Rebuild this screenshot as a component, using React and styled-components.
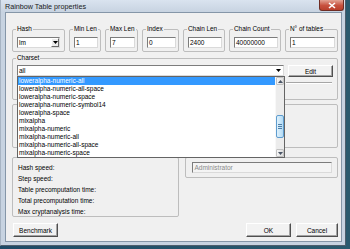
import React from 'react'
import styled, { createGlobalStyle } from 'styled-components'

const GlobalStyle = createGlobalStyle`
  html, body {
    margin: 0;
    padding: 0;
  }
  body {
    width: 350px;
    height: 249px;
    overflow: hidden;
    background: linear-gradient(90deg, #1e4a66, #2a5a6e);
    font-family: "Liberation Sans", Arial, sans-serif;
    color: #000;
  }
`

const Window = styled.div`
  box-sizing: border-box;
  width: 346px;
  height: 246px;
  display: flex;
  flex-direction: column;
  padding: 0 3px 3px 4px;
  background: #c7d3e1;
  border-left: 1px solid #a7b4c3;
  border-right: 1px solid #4d5e6d;
  border-bottom: 1px solid #4d5e6d;
`

const TitleBar = styled.div`
  height: 12px;
  display: flex;
  align-items: flex-start;
  margin: 0 -3px 0 -4px;
  padding-left: 4px;
  background: linear-gradient(#d9e3ef, #c7d3e1);
`

const Title = styled.div`
  font-size: 7.2px;
  line-height: 12px;
  padding-top: 1px;
  color: #1a1a1a;
`

const Close = styled.div`
  box-sizing: border-box;
  margin-left: auto;
  margin-right: 1px;
  width: 25px;
  height: 11px;
  display: flex;
  align-items: center;
  justify-content: center;
  background: linear-gradient(#e3a393, #c7513e 55%, #b9402c);
  border: 1px solid #6f2d24;
  border-top: none;
  border-radius: 0 0 3px 3px;
`

const Client = styled.div`
  flex: 1;
  display: flex;
  flex-direction: column;
  padding: 12px 3px 3px 6px;
  background: #f0f0f0;
  border: 1px solid #8596a8;
`

const Row = styled.div`
  display: flex;
  gap: ${p => p.$gap || 4}px;
  align-items: flex-start;
  margin-top: ${p => p.$top || 0}px;
`

const Group = styled.fieldset`
  box-sizing: border-box;
  margin: 0;
  min-width: 0;
  width: ${p => (p.$w ? p.$w + 'px' : 'auto')};
  height: ${p => (p.$h ? p.$h + 'px' : 'auto')};
  padding: ${p => p.$pad || '4px 2px 3px 4px'};
  border: 1px solid #bdbdbd;
  border-radius: 2px;
`

const Caption = styled.legend`
  padding: 0 1px;
  margin-left: -1px;
  font-size: 6.4px;
  line-height: 8px;
  white-space: nowrap;
`

const Field = styled.div`
  box-sizing: border-box;
  height: 11px;
  padding: 0 1px;
  font-size: 6.5px;
  line-height: 9px;
  background: ${p => (p.$disabled ? '#f4f4f4' : '#fff')};
  color: ${p => (p.$disabled ? '#8a8a8a' : '#000')};
  border: 1px solid;
  border-color: #7c7c7c #dadada #dadada #7c7c7c;
`

const Combo = styled.div`
  position: relative;
  box-sizing: border-box;
  flex: 1;
  height: 11px;
  display: flex;
  align-items: center;
  padding-left: 1px;
  font-size: 6.5px;
  background: #fff;
  border: 1px solid;
  border-color: #7c7c7c #dadada #dadada #7c7c7c;
`

const ComboText = styled.span`
  flex: 1;
`

const DropButton = styled.div`
  box-sizing: border-box;
  width: 8px;
  height: 9px;
  display: flex;
  align-items: center;
  justify-content: center;
  background: #ececec;
  border: 1px solid;
  border-color: #fff #6a6a6a #6a6a6a #fff;
`

const Arrow = ({ up, color = '#000' }) => (
  <svg width="5" height="3" viewBox="0 0 5 3">
    <path d={up ? 'M0 3 L2.5 0 L5 3 Z' : 'M0 0 L5 0 L2.5 3 Z'} fill={color} />
  </svg>
)

const ComboArrow = styled.div`
  display: flex;
  margin-right: 2px;
`

const Button = styled.button`
  box-sizing: border-box;
  width: ${p => p.$w}px;
  height: ${p => p.$h || 14}px;
  margin: 0;
  padding: 0;
  display: flex;
  align-items: center;
  justify-content: center;
  font-family: inherit;
  font-size: 6.5px;
  color: #000;
  background: #f2f2f2;
  border: 1px solid;
  border-color: #fff #4f4f4f #4f4f4f #fff;
  box-shadow: inset -1px -1px 0 #a3a3a3;
`

const Separator = styled.div`
  width: 46px;
  height: 0;
  margin: 5px 1px 0 auto;
  border-top: 1px solid #a6a6a6;
  border-bottom: 1px solid #fff;
`

const DropList = styled.div`
  position: absolute;
  top: 10px;
  left: -1px;
  z-index: 5;
  box-sizing: border-box;
  width: 268px;
  height: 82px;
  display: flex;
  background: #fff;
  border: 1px solid #646464;
`

const Items = styled.div`
  flex: 1;
`

const Item = styled.div`
  height: 8px;
  line-height: 8px;
  padding-left: 1px;
  font-size: 6.5px;
  white-space: nowrap;
  background: ${p => (p.$selected ? '#3399ff' : 'transparent')};
  color: ${p => (p.$selected ? '#fff' : '#000')};
`

const ScrollBar = styled.div`
  width: 8px;
  display: flex;
  flex-direction: column;
  background: #ececec;
  border-left: 1px solid #f8f8f8;
`

const ScrollButton = styled.div`
  box-sizing: border-box;
  height: 8px;
  display: flex;
  align-items: center;
  justify-content: center;
  background: linear-gradient(90deg, #f6f6f6, #dedede);
  border: 1px solid #c2c2c2;
  border-radius: 1px;
`

const Track = styled.div`
  flex: 1;
`

const Thumb = styled.div`
  box-sizing: border-box;
  height: 23px;
  margin-top: 30px;
  display: flex;
  flex-direction: column;
  align-items: center;
  justify-content: center;
  gap: 1px;
  background: linear-gradient(90deg, #dff1fc, #b3dbf5);
  border: 1px solid #5f9dcf;
  border-radius: 2px;
`

const Grip = styled.div`
  width: 4px;
  height: 1px;
  background: #4f7fa8;
`

const InfoLine = styled.div`
  font-size: 6.5px;
  line-height: 11px;
`

const Spacer = styled.div`
  flex: 1;
`

const topGroups = [
  { label: 'Min Len', w: 32, value: '1' },
  { label: 'Max Len', w: 33, value: '7' },
  { label: 'Index', w: 37, value: '0' },
  { label: 'Chain Len', w: 42, value: '2400' },
  { label: 'Chain Count', w: 52, value: '40000000' },
  { label: 'N° of tables', w: 53, value: '1' },
]

const charsets = [
  'loweralpha-numeric-all',
  'loweralpha-numeric-all-space',
  'loweralpha-numeric-space',
  'loweralpha-numeric-symbol14',
  'loweralpha-space',
  'mixalpha',
  'mixalpha-numeric',
  'mixalpha-numeric-all',
  'mixalpha-numeric-all-space',
  'mixalpha-numeric-space',
]

const infoLines = [
  'Hash speed:',
  'Step speed:',
  'Table precomputation time:',
  'Total precomputation time:',
  'Max cryptanalysis time:',
]

export default function App() {
  return (
    <>
      <GlobalStyle />
      <Window>
        <TitleBar>
          <Title>Rainbow Table properties</Title>
          <Close>
            <svg width="8" height="7" viewBox="0 0 8 7">
              <path d="M1 1 L7 6 M7 1 L1 6" stroke="#fff" strokeWidth="1.6" />
            </svg>
          </Close>
        </TitleBar>

        <Client>
          <Row>
            <Group $w={53} $pad="4px 4px 3px 4px">
              <Caption>Hash</Caption>
              <Combo>
                <ComboText>lm</ComboText>
                <DropButton>
                  <Arrow />
                </DropButton>
              </Combo>
            </Group>
            {topGroups.map(g => (
              <Group key={g.label} $w={g.w}>
                <Caption>{g.label}</Caption>
                <Field>{g.value}</Field>
              </Group>
            ))}
          </Row>

          <Row $top={2}>
            <Group $w={327} $h={46} $pad="3px 4px 0 4px">
              <Caption>Charset</Caption>
              <Row>
                <Combo>
                  <ComboText>all</ComboText>
                  <ComboArrow>
                    <Arrow />
                  </ComboArrow>
                  <DropList>
                    <Items>
                      {charsets.map((c, i) => (
                        <Item key={c} $selected={i === 0}>{c}</Item>
                      ))}
                    </Items>
                    <ScrollBar>
                      <ScrollButton>
                        <Arrow up color="#4a5566" />
                      </ScrollButton>
                      <Track>
                        <Thumb>
                          <Grip />
                          <Grip />
                          <Grip />
                        </Thumb>
                      </Track>
                      <ScrollButton>
                        <Arrow color="#4a5566" />
                      </ScrollButton>
                    </ScrollBar>
                  </DropList>
                </Combo>
                <Button $w={45} $h={12}>Edit</Button>
              </Row>
              <Separator />
            </Group>
          </Row>

          <Row $top={4}>
            <Group $w={327} $h={44} />
          </Row>

          <Row $top={9} $gap={6}>
            <Group $w={168} $h={60} $pad="4px 4px 0 5px">
              {infoLines.map(l => (
                <InfoLine key={l}>{l}</InfoLine>
              ))}
            </Group>
            <Group $w={153} $h={21} $pad="4px 5px 0 6px">
              <Field $disabled>Administrator</Field>
            </Group>
          </Row>

          <Row $top={6} $gap={5}>
            <Button $w={45} style={{ marginLeft: 1 }}>Benchmark</Button>
            <Spacer />
            <Button $w={45}>OK</Button>
            <Button $w={42}>Cancel</Button>
          </Row>
        </Client>
      </Window>
    </>
  )
}
